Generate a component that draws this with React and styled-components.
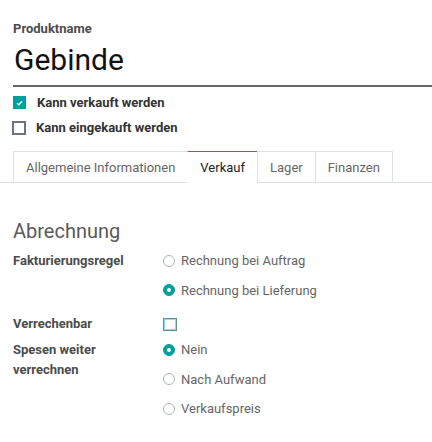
import React from "react";
import styled, { createGlobalStyle } from "styled-components";

const GlobalStyle = createGlobalStyle`
  body {
    margin: 0;
    background: #fff;
    font-family: Roboto, "Noto Sans", sans-serif;
    color: #4c4c4c;
  }
`;

const Page = styled.div`
  width: 432px;
  height: 442px;
  overflow: hidden;
  padding-top: 20px;
  box-sizing: border-box;
`;

const Title = styled.div`
  margin-left: 13px;
  border-bottom: 2px solid #666;
  padding-bottom: 7px;
`;

const FieldCaption = styled.div`
  font-size: 13px;
  font-weight: 700;
  line-height: 18px;
  color: #4c4c4c;
`;

const NameInput = styled.div`
  font-size: 30px;
  line-height: 36px;
  color: #111;
  margin-top: 4px;
  padding-left: 1px;
`;

const Checks = styled.div`
  padding: 3px 13px 0;
`;

const CheckRow = styled.label`
  display: flex;
  align-items: center;
  height: 25px;
  gap: 10px;
  font-size: 13px;
  font-weight: 700;
  color: #333;
`;

const Box = styled.span`
  width: ${({ $checked }) => ($checked ? "13px" : "14px")};
  height: ${({ $checked }) => ($checked ? "13px" : "14px")};
  box-sizing: border-box;
  display: flex;
  align-items: center;
  justify-content: center;
  background: ${({ $checked }) => ($checked ? "#00a09d" : "#fff")};
  border: ${({ $checked }) => ($checked ? "none" : "2px solid #6c757d")};
  margin-left: ${({ $checked }) => ($checked ? "0" : "-1px")};
  margin-right: ${({ $checked }) => ($checked ? "1px" : "0")};
`;

const TabBar = styled.div`
  display: flex;
  margin-top: 11px;
  padding-left: 13px;
  border-bottom: 1px solid #dee2e6;
`;

const Tab = styled.div`
  height: 32px;
  box-sizing: border-box;
  display: flex;
  align-items: center;
  padding: 0 12px;
  font-size: 13px;
  margin-bottom: -1px;
  margin-right: -1px;
  color: ${({ $active }) => ($active ? "#222" : "#666")};
  background: #fff;
  border: 1px solid ${({ $active }) => ($active ? "transparent" : "#dee2e6")};
  border-top-color: ${({ $active }) => ($active ? "#875a7b" : "#dee2e6")};
  border-bottom-color: ${({ $active }) => ($active ? "#fff" : "#dee2e6")};
`;

const Sheet = styled.div`
  padding: 36px 13px 0;
`;

const Heading = styled.div`
  font-size: 20px;
  line-height: 24px;
  color: #5a5a5a;
  margin-bottom: 3px;
`;

const FieldRow = styled.div`
  display: grid;
  grid-template-columns: 150px 1fr;
  align-items: ${({ $center }) => ($center ? "center" : "start")};
  height: ${({ $h }) => ($h ? `${$h}px` : "auto")};
  margin-top: ${({ $mt }) => ($mt ? `${$mt}px` : "0")};
`;

const Label = styled.div`
  font-size: 13px;
  font-weight: 700;
  line-height: 20px;
  color: #4c4c4c;
  padding-top: ${({ $center }) => ($center ? "0" : "4.5px")};
`;

const RadioGroup = styled.div`
  display: flex;
  flex-direction: column;
`;

const RadioItem = styled.div`
  display: flex;
  align-items: center;
  height: 29.5px;
  gap: 6px;
  font-size: 13px;
  color: #666;
`;

const RadioDot = styled.span`
  width: 12px;
  height: 12px;
  border-radius: 50%;
  box-sizing: border-box;
  flex-shrink: 0;
  display: flex;
  align-items: center;
  justify-content: center;
  background: ${({ $on }) => ($on ? "#00a09d" : "#fff")};
  border: 1px solid ${({ $on }) => ($on ? "#00a09d" : "#adb5bd")};
  &::after {
    content: "";
    display: ${({ $on }) => ($on ? "block" : "none")};
    width: 4px;
    height: 4px;
    border-radius: 50%;
    background: #fff;
  }
`;

const FocusBox = styled.span`
  width: 14px;
  height: 13px;
  box-sizing: border-box;
  border: 1px solid #6f8c8c;
  box-shadow: inset 0 0 0 1px #7ae8e8;
  background: #fff;
`;

function Check({ checked, children }) {
  return (
    <CheckRow>
      <Box $checked={checked}>
        {checked && (
          <svg width="7" height="6" viewBox="0 0 7 6">
            <path d="M1 3.2 L2.8 4.8 L6 1.2" stroke="#fff" strokeWidth="1.3" fill="none" />
          </svg>
        )}
      </Box>
      {children}
    </CheckRow>
  );
}

function Radios({ options, value }) {
  return (
    <RadioGroup>
      {options.map((o) => (
        <RadioItem key={o}>
          <RadioDot $on={o === value} />
          {o}
        </RadioItem>
      ))}
    </RadioGroup>
  );
}

export default function App() {
  const tabs = ["Allgemeine Informationen", "Verkauf", "Lager", "Finanzen"];
  return (
    <>
      <GlobalStyle />
      <Page>
        <Title>
          <FieldCaption>Produktname</FieldCaption>
          <NameInput>Gebinde</NameInput>
        </Title>
        <Checks>
          <Check checked>Kann verkauft werden</Check>
          <Check>Kann eingekauft werden</Check>
        </Checks>
        <TabBar>
          {tabs.map((t) => (
            <Tab key={t} $active={t === "Verkauf"}>
              {t}
            </Tab>
          ))}
        </TabBar>
        <Sheet>
          <Heading>Abrechnung</Heading>
          <FieldRow>
            <Label>Fakturierungsregel</Label>
            <Radios
              options={["Rechnung bei Auftrag", "Rechnung bei Lieferung"]}
              value="Rechnung bei Lieferung"
            />
          </FieldRow>
          <FieldRow $center $h={22} $mt={8}>
            <Label $center>Verrechenbar</Label>
            <FocusBox />
          </FieldRow>
          <FieldRow>
            <Label>
              Spesen weiter
              <br />
              verrechnen
            </Label>
            <Radios options={["Nein", "Nach Aufwand", "Verkaufspreis"]} value="Nein" />
          </FieldRow>
        </Sheet>
      </Page>
    </>
  );
}
